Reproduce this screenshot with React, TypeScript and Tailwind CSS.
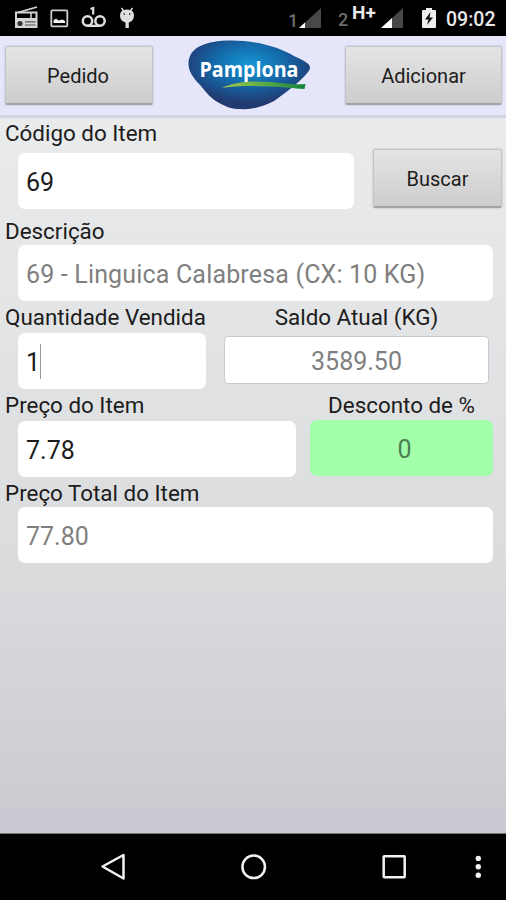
import React from "react";

const Label = ({ text, className = "" }: { text: string; className?: string }) => (
  <p className={`h-[28px] whitespace-nowrap text-[22.4px] leading-[28px] text-[#1c1c1c] ${className}`}>
    {text}
  </p>
);

const Button = ({ text, className = "" }: { text: string; className?: string }) => (
  <button
    className={`rounded-[2px] border border-[#c4c5c9] border-b-2 border-b-[#a3a4a8] bg-linear-to-b from-[#e4e4e4] to-[#cdcdcd] pt-[2px] text-[20px] text-[#1c1c1c] shadow-[0_0_2px_rgba(0,0,0,0.25)] ${className}`}
  >
    {text}
  </button>
);

const StatusBar = () => (
  <div className="flex h-[36px] items-center bg-black text-white">
    <svg width="150" height="36" viewBox="0 0 150 36" fill="none">
      {/* radio */}
      <path d="M18 12.500 37 7" stroke="#d6d6d6" strokeWidth="1.800" />
      <path fillRule="evenodd" fill="#d6d6d6" d="M15 11.500h22.500V28H15zM17 13.500v4.500h18.500v-4.500z" />
      <path d="M31 13v5" stroke="#d6d6d6" strokeWidth="1.500" />
      <circle cx="20" cy="23.500" r="2.600" fill="#333" />
      <path d="M25 21.800h10.500M25 25h10.500" stroke="#555" strokeWidth="1.200" />
      {/* picture */}
      <rect x="51.300" y="10.300" width="16" height="16" rx="1" stroke="#cfcfcf" strokeWidth="1.800" />
      <path d="m53.500 23 0-2.500 2.500-2 2.500 2 4-1 2.500 1.500v2z" fill="#f2f2f2" />
      {/* voicemail */}
      <circle cx="87.500" cy="21" r="4.700" stroke="#dedede" strokeWidth="2.500" />
      <circle cx="100" cy="21" r="4.700" stroke="#dedede" strokeWidth="2.500" />
      <path d="M87 25.800h13M90.500 9l2.700-1v6.500" stroke="#dedede" strokeWidth="2.200" />
      {/* robot */}
      <path d="m121.500 8 3 4M132.500 8l-3 4" stroke="#dedede" strokeWidth="1.400" />
      <path d="M120 15.500q0-6 7-6t7 6q0 5.500-5.200 7v5.500h-3.300v-5.500q-5.500-1.500-5.500-7z" fill="#dedede" />
      <path d="M123.500 14h1.500M129 14h1.500" stroke="#333" strokeWidth="1.500" />
    </svg>
    <div className="ml-auto flex h-[36px] items-center">
      <span className="mt-[4px] w-[13px] -ml-[1px] text-[18px] font-medium text-[#6c6c6c]">1</span>
      <svg className="-ml-[2px] mr-[2px]" width="22" height="20" viewBox="0 0 22 20">
        <path d="M0 20 22 0v20z" fill="#484848" />
        <path d="m0 20 6-5.500V20z" fill="#fff" />
      </svg>
      <span className="ml-[15px] mt-[3px] w-[14px] text-[18px] font-medium text-[#6c6c6c]">2</span>
      <span className="mb-[9px] w-[26px] text-[19px] font-bold text-[#e9e9e9]">H+</span>
      <svg className="ml-[3px]" width="22" height="20" viewBox="0 0 22 20">
        <path d="M0 20 22 0v20z" fill="#484848" />
        <path d="m0 20 11-10v10z" fill="#fff" />
      </svg>
      <svg className="ml-[19px] mr-[1px]" width="14" height="20" viewBox="0 0 14 20">
        <path d="M1 2h3V0h6v2h3q1 0 1 1v16q0 1-1 1H1q-1 0-1-1V3q0-1 1-1z" fill="#efefef" />
        <path d="M8.500 4 3 11.500h3.500L5 17l6-7.500H7.500z" fill="#111" />
      </svg>
      <span className="ml-[9px] mr-[10px] mt-[3px] w-[50px] whitespace-nowrap text-[19.5px] font-medium text-[#e9e9e9]">09:02</span>
    </div>
  </div>
);

const Logo = () => (
  <svg width="124" height="72" viewBox="0 0 124 72">
    <defs>
      <radialGradient id="blue" cx="0.5" cy="0.35" r="0.56">
        <stop offset="0" stopColor="#1797d4" />
        <stop offset="0.5" stopColor="#146bab" />
        <stop offset="1" stopColor="#213a72" />
      </radialGradient>
      <linearGradient id="green" x1="0" x2="1">
        <stop offset="0" stopColor="#a3c94a" />
        <stop offset="0.6" stopColor="#4fa548" />
        <stop offset="1" stopColor="#12803c" />
      </linearGradient>
    </defs>
    <path
      d="M.5 26C.5 10 16 2.500 44 2.500c24 0 48 7 62 15.500 11 5 16.500 8 16 12-.5 5-16 19-36 33-12 6-22 9-34 8-8 0-13-2-19-5-10-5-15-12-20-18C5 40 .5 33 .5 26z"
      fill="url(#blue)"
    />
    <path d="M34 50c17-8.500 40-7 63-4.500 8 .7 15 1 20.500.5l-1 5c-7 0-14-1-21-1.700-22-1.500-44-2.300-61.500.7z" fill="url(#green)" />
    <text x="11.500" y="39" textLength="99" lengthAdjust="spacingAndGlyphs" fill="#fff" fontFamily="Open Sans, sans-serif" fontWeight="700" fontSize="22">
      Pamplona
    </text>
  </svg>
);

const NavBar = () => (
  <div className="flex h-[67px] items-center border-t border-[#77777a] bg-black">
    <svg width="506" height="66" viewBox="0 0 506 66" fill="none" stroke="#f2f2f2" strokeWidth="2.500" strokeLinejoin="round">
      <path d="M102.500 32.500 123.500 21v23.500z" />
      <circle cx="253.700" cy="32.800" r="11.300" />
      <rect x="383.700" y="22.200" width="21" height="21" rx="0.500" />
      <g fill="#f2f2f2" stroke="none">
        <circle cx="478.300" cy="24.400" r="2.700" />
        <circle cx="478.300" cy="32.800" r="2.700" />
        <circle cx="478.300" cy="41.200" r="2.700" />
      </g>
    </svg>
  </div>
);

const field = "flex h-[56px] items-center rounded-[7px] bg-white pl-[8px] pt-[4px] text-[25px] whitespace-nowrap";

const App = () => {
  return (
    <div className="flex h-[900px] w-[506px] flex-col overflow-hidden font-['Roboto',sans-serif]">
      <StatusBar />
      <header className="flex h-[82px] items-start justify-between border-b-[3px] border-[#d2d4e0] bg-[#e6e6fa] pl-[5px] pr-[4px]">
        <Button text="Pedido" className="mt-[10px] h-[59px] w-[148px] pr-[8px] pl-[6px]" />
        <div className="mt-[2px] pl-[1px]">
          <Logo />
        </div>
        <Button text="Adicionar" className="mt-[10px] h-[59px] w-[157px]" />
      </header>
      <main className="flex flex-1 flex-col bg-linear-to-b from-[#e9ebec] via-[#dadbdd] via-65% to-[#c9c9d1]">
        <div className="flex justify-between pr-[4px]">
          <div>
            <Label text="Código do Item" className="mt-[1px] pl-[5px]" />
            <div className={`${field} ml-[18px] mt-[6px] w-[336px] text-[#1c1c1c]`}>69</div>
          </div>
          <Button text="Buscar" className="mt-[31px] h-[59px] w-[129px]" />
        </div>

        <Label text="Descrição" className="mt-[8px] pl-[5px]" />
        <div className={`${field} ml-[18px] w-[475px] tracking-[0.17px] text-[#7f7f7f]`}>
          69 - Linguica Calabresa (CX: 10 KG)
        </div>

        <div className="mt-[2px] flex">
          <div className="w-[206px]">
            <Label text="Quantidade Vendida" className="pl-[5px]" />
            <div className={`${field} ml-[18px] mt-[2px] text-[#1c1c1c]`}>
              1<span className="mb-[3px] h-[35px] w-px bg-[#999]" />
            </div>
          </div>
          <div className="ml-[18px] w-[265px]">
            <Label text="Saldo Atual (KG)" className="text-center" />
            <div className="mt-[5px] flex h-[48px] items-center justify-center rounded-[4px] border border-[#c9cbce] bg-white pt-[4px] text-[25px] text-[#7f7f7f]">
              3589.50
            </div>
          </div>
        </div>

        <div className="mt-[2px] flex">
          <div className="w-[296px]">
            <Label text="Preço do Item" className="pl-[5px]" />
            <div className={`${field} ml-[18px] mt-[2px] text-[#1c1c1c]`}>7.78</div>
          </div>
          <div className="ml-[14px] w-[183px]">
            <Label text="Desconto de %" className="text-center" />
            <div className="mt-[1px] flex h-[56px] items-center justify-center rounded-[7px] bg-[#a2ffaa] pl-[6px] pt-[4px] text-[25px] text-[#4d7f52]">
              0
            </div>
          </div>
        </div>

        <Label text="Preço Total do Item" className="mt-[2px] pl-[5px]" />
        <div className={`${field} ml-[18px] w-[475px] text-[#7f7f7f]`}>77.80</div>
      </main>
      <NavBar />
    </div>
  );
};

export default App;
